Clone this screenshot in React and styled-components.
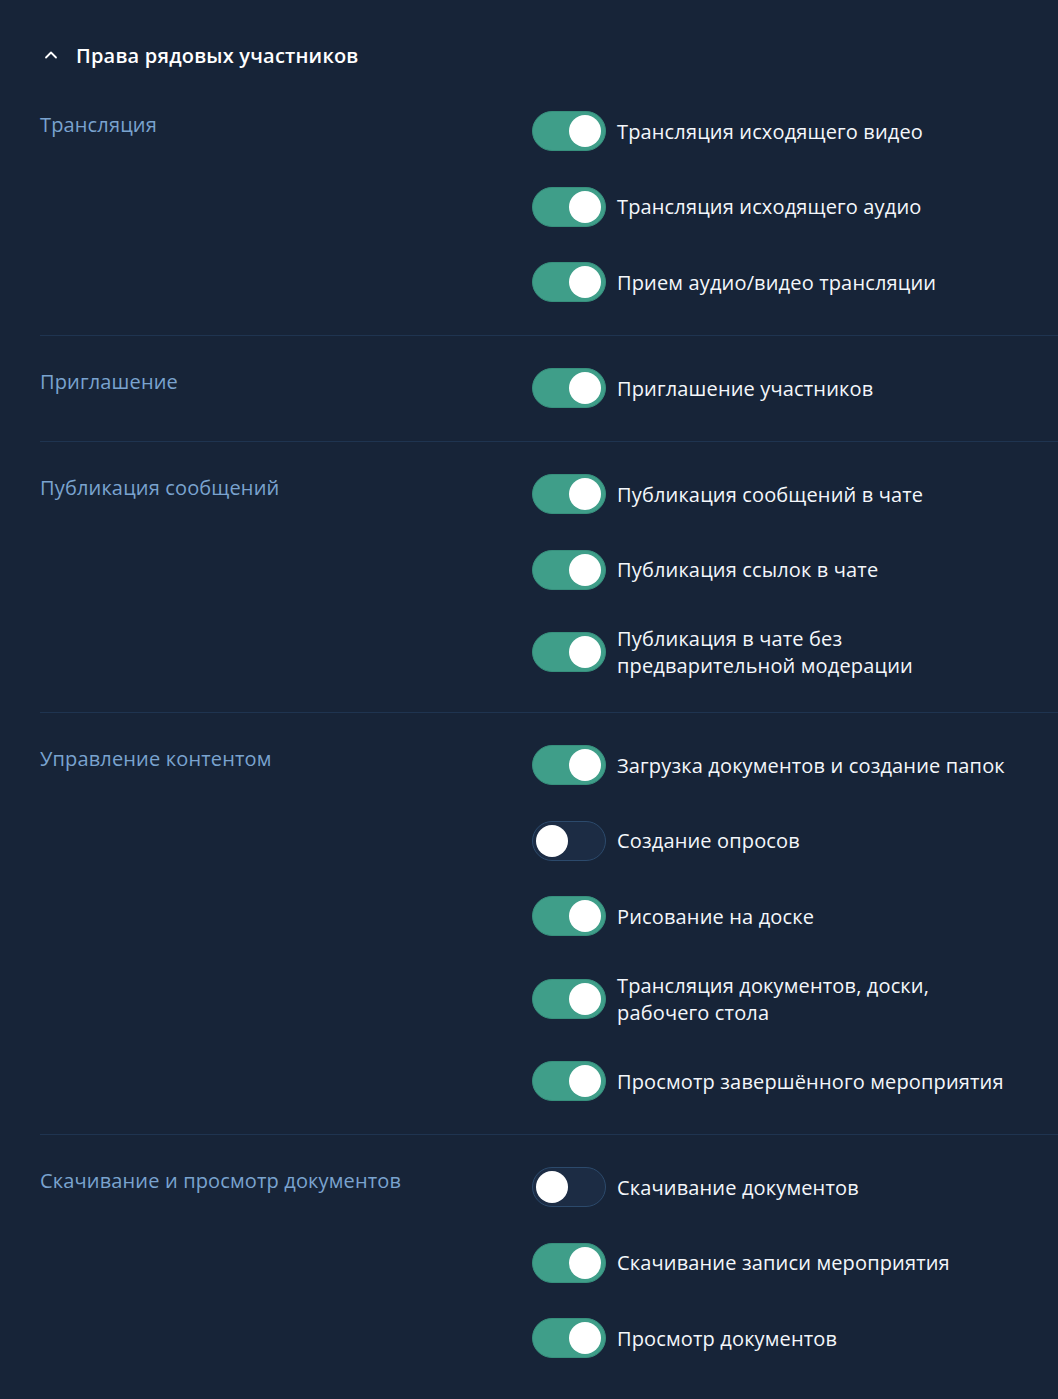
import React, { useState } from 'react';
import styled, { createGlobalStyle } from 'styled-components';

const GlobalStyle = createGlobalStyle`
    html, body {
        margin: 0;
        padding: 0;
        background: #172438;
    }
    body {
        font-family: "Open Sans", "Noto Sans", "Liberation Sans", sans-serif;
        -webkit-font-smoothing: antialiased;
    }
`;

const groups = [
    {
        title: 'Трансляция',
        items: [
            { name: 'Трансляция исходящего видео', on: true },
            { name: 'Трансляция исходящего аудио', on: true },
            { name: 'Прием аудио/видео трансляции', on: true },
        ],
    },
    {
        title: 'Приглашение',
        items: [{ name: 'Приглашение участников', on: true }],
    },
    {
        title: 'Публикация сообщений',
        items: [
            { name: 'Публикация сообщений в чате', on: true },
            { name: 'Публикация ссылок в чате', on: true },
            { name: 'Публикация в чате без предварительной модерации', on: true },
        ],
    },
    {
        title: 'Управление контентом',
        items: [
            { name: 'Загрузка документов и создание папок', on: true },
            { name: 'Создание опросов', on: false },
            { name: 'Рисование на доске', on: true },
            { name: 'Трансляция документов, доски, рабочего стола', on: true },
            { name: 'Просмотр завершённого мероприятия', on: true },
        ],
    },
    {
        title: 'Скачивание и просмотр документов',
        items: [
            { name: 'Скачивание документов', on: false },
            { name: 'Скачивание записи мероприятия', on: true },
            { name: 'Просмотр документов', on: true },
        ],
    },
];

function Switch({ on, onClick }) {
    return (
        <Track $on={on} onClick={onClick} role="switch" aria-checked={on}>
            <Knob $on={on} />
        </Track>
    );
}

export default function App() {
    const [state, setState] = useState(groups.map(g => g.items.map(i => i.on)));
    const [open, setOpen] = useState(true);

    const toggle = (gi, ii) => {
        setState(prev => prev.map((g, a) => g.map((v, b) => (a === gi && b === ii ? !v : v))));
    };

    return (
        <>
            <GlobalStyle />
            <Page>
                <Header onClick={() => setOpen(!open)}>
                    <Chevron $open={open} viewBox="0 0 16 16" width="16" height="16">
                        <path d="M3 10.5 L8 5.5 L13 10.5" fill="none" stroke="#ffffff" strokeWidth="1.8" strokeLinecap="round" strokeLinejoin="round" />
                    </Chevron>
                    <HeaderTitle>Права рядовых участников</HeaderTitle>
                </Header>
                {open && groups.map((group, gi) => (
                    <Group key={group.title} $last={gi === groups.length - 1} $first={gi === 0}>
                        <GroupTitle>{group.title}</GroupTitle>
                        <Items>
                            {group.items.map((item, ii) => (
                                <Item key={item.name}>
                                    <Switch on={state[gi][ii]} onClick={() => toggle(gi, ii)} />
                                    <ItemText>{item.name}</ItemText>
                                </Item>
                            ))}
                        </Items>
                    </Group>
                ))}
            </Page>
        </>
    );
}

const Page = styled.div`
    padding: 35px 0 40px 40px;
    min-height: 1399px;
    box-sizing: border-box;
    background: #172438;
`;

const Header = styled.div`
    display: flex;
    align-items: center;
    height: 40px;
    gap: 17px;
    cursor: pointer;
    user-select: none;
`;

const Chevron = styled.svg`
    margin-left: 3px;
    transform: rotate(${p => (p.$open ? 0 : 180)}deg);
`;

const HeaderTitle = styled.span`
    color: #ffffff;
    font-size: 20px;
    font-weight: 600;
    letter-spacing: 0.2px;
`;

const Group = styled.div`
    display: grid;
    grid-template-columns: 492px 1fr;
    padding: ${p => (p.$first ? '36px' : '32px')} 0 33px 0;
    border-bottom: ${p => (p.$last ? 'none' : '1px solid #1f3450')};
`;

const GroupTitle = styled.div`
    color: #7aa3cf;
    font-size: 20px;
    line-height: 27px;
    letter-spacing: 0.15px;
`;

const Items = styled.div`
    display: flex;
    flex-direction: column;
    gap: 35.5px;
`;

const Item = styled.div`
    display: flex;
    align-items: center;
    gap: 11px;
    min-height: 40px;
`;

const ItemText = styled.span`
    max-width: 396px;
    color: #f4f7fb;
    font-size: 20px;
    line-height: 27px;
    letter-spacing: 0.15px;
`;

const Track = styled.button`
    flex: 0 0 auto;
    position: relative;
    width: 74px;
    height: 40px;
    padding: 0;
    border-radius: 20px;
    border: 1px solid ${p => (p.$on ? '#37907d' : '#2c4a6c')};
    background: ${p => (p.$on ? '#3f9e89' : '#1c2c44')};
    cursor: pointer;
    box-sizing: border-box;
`;

const Knob = styled.span`
    position: absolute;
    top: 3px;
    left: ${p => (p.$on ? '36px' : '3px')};
    width: 32px;
    height: 32px;
    border-radius: 50%;
    background: #ffffff;
    transition: left 0.2s ease;
`;
